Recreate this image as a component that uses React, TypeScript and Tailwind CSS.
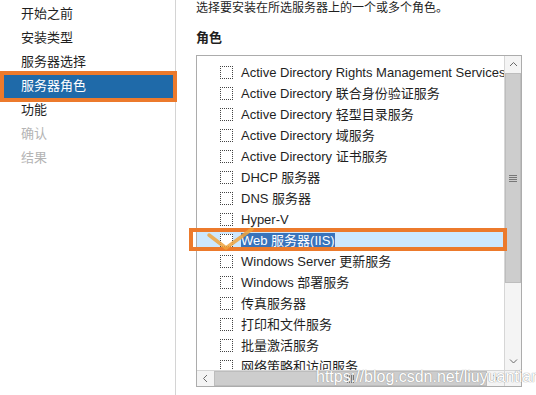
const nav = [
  { label: "开始之前", state: "normal" },
  { label: "安装类型", state: "normal" },
  { label: "服务器选择", state: "normal" },
  { label: "服务器角色", state: "active" },
  { label: "功能", state: "normal" },
  { label: "确认", state: "disabled" },
  { label: "结果", state: "disabled" },
];

const roles = [
  "Active Directory Rights Management Services",
  "Active Directory 联合身份验证服务",
  "Active Directory 轻型目录服务",
  "Active Directory 域服务",
  "Active Directory 证书服务",
  "DHCP 服务器",
  "DNS 服务器",
  "Hyper-V",
  "Web 服务器(IIS)",
  "Windows Server 更新服务",
  "Windows 部署服务",
  "传真服务器",
  "打印和文件服务",
  "批量激活服务",
  "网络策略和访问服务",
];

const SELECTED = "Web 服务器(IIS)";

function Chevron({ dir }: { dir: "up" | "down" | "left" | "right" }) {
  const d = {
    up: "M1 5 L4.5 1.5 L8 5",
    down: "M1 1.5 L4.5 5 L8 1.5",
    left: "M5 1 L1.5 4.5 L5 8",
    right: "M1.5 1 L5 4.5 L1.5 8",
  }[dir];
  const vertical = dir === "up" || dir === "down";
  return (
    <svg
      width={vertical ? 9 : 7}
      height={vertical ? 7 : 9}
      viewBox={vertical ? "0 0 9 7" : "0 0 7 9"}
      fill="none"
      stroke="#6a6a6a"
      strokeWidth="1"
    >
      <path d={d} />
    </svg>
  );
}

function Grip({ horizontal }: { horizontal?: boolean }) {
  return (
    <div className={horizontal ? "flex flex-row gap-[1px]" : "flex flex-col gap-[1px]"}>
      {[0, 1, 2, 3].map((i) => (
        <div
          key={i}
          className={horizontal ? "w-[1px] h-[8px] bg-[#777]" : "h-[1px] w-[8px] bg-[#777]"}
        />
      ))}
    </div>
  );
}

export default function App() {
  return (
    <div
      className="relative w-[536px] h-[395px] overflow-hidden bg-white flex text-[#1f1f1f]"
      style={{ fontFamily: '"Liberation Sans", "Noto Sans CJK SC", sans-serif' }}
    >
      {/* left steps */}
      <aside className="w-[176px] h-full border-r border-[#d4d4d4] pt-[2px] shrink-0">
        {nav.map((item) => (
          <div
            key={item.label}
            className={
              item.state === "active"
                ? "h-[24px] leading-[24px] pl-[21px] text-[13px] bg-[#1f6aa9] text-white"
                : item.state === "disabled"
                ? "h-[24px] leading-[24px] pl-[21px] text-[13px] text-[#b4b4b4]"
                : "h-[24px] leading-[24px] pl-[21px] text-[13px]"
            }
          >
            {item.label}
          </div>
        ))}
      </aside>

      {/* right content */}
      <main className="flex-1 pl-[20px]">
        <p className="h-[16px] leading-[16px] text-[12px]">选择要安装在所选服务器上的一个或多个角色。</p>
        <h2 className="mt-[14px] h-[16px] leading-[16px] text-[13px] font-bold">角色</h2>

        <div className="mt-[9px] w-[326px] h-[332px] border border-[#acacac] flex flex-col">
          <div className="flex flex-1 min-h-0">
            <ul className="flex-1 overflow-hidden pt-[6px]">
              {roles.map((r) => {
                const sel = r === SELECTED;
                return (
                  <li
                    key={r}
                    className={
                      sel
                        ? "h-[21px] flex items-center pl-[23px] gap-[8px] bg-[#cce8ff] whitespace-nowrap"
                        : "h-[21px] flex items-center pl-[23px] gap-[8px] whitespace-nowrap"
                    }
                  >
                    <span className="w-[13px] h-[13px] border border-dotted border-[#444] shrink-0 bg-white" />
                    <span
                      className={
                        sel
                          ? "text-[13px] leading-[15px] bg-[#3873bb] text-white"
                          : "text-[13px] leading-[15px]"
                      }
                    >
                      {r}
                    </span>
                  </li>
                );
              })}
            </ul>

            {/* vertical scrollbar */}
            <div className="w-[17px] flex flex-col bg-[#f4f4f4] border-l border-[#d6d6d6]">
              <div className="h-[17px] flex items-center justify-center">
                <Chevron dir="up" />
              </div>
              <div className="h-[210px] bg-[#cdcdcd] border border-[#bdbdbd] flex items-center justify-center">
                <Grip />
              </div>
              <div className="flex-1" />
              <div className="h-[17px] flex items-center justify-center">
                <Chevron dir="down" />
              </div>
            </div>
          </div>

          {/* horizontal scrollbar */}
          <div className="h-[16px] flex bg-[#f4f4f4] border-t border-[#d6d6d6]">
            <div className="w-[17px] flex items-center justify-center">
              <Chevron dir="left" />
            </div>
            <div className="w-[273px] bg-[#cdcdcd] border border-[#bdbdbd] flex items-center justify-center">
              <Grip horizontal />
            </div>
            <div className="w-[17px] flex items-center justify-center">
              <Chevron dir="right" />
            </div>
            <div className="w-[17px] border-l border-[#d6d6d6]" />
          </div>
        </div>
      </main>

      {/* annotation overlays */}
      <div className="absolute left-0 top-[71px] w-[177px] h-[31px] border-4 border-[#ec7a2c]" />
      <div className="absolute left-[189px] top-[228px] w-[318px] h-[23px] border-4 border-[#ec7a2c]" />
      <svg className="absolute left-[200px] top-[222px]" width="60" height="34" viewBox="0 0 60 34">
        <polyline
          points="9,13 26,26 52,7"
          fill="none"
          stroke="#f0a33c"
          strokeOpacity="0.85"
          strokeWidth="3.5"
          strokeLinecap="round"
          strokeLinejoin="round"
        />
      </svg>

      {/* watermark */}
      <div
        className="absolute left-[316px] top-[368px] text-[16px] leading-[18px] text-white whitespace-nowrap"
        style={{ textShadow: "0 0 1px #9a9a9a, 0 0 1px #9a9a9a" }}
      >
        https://blog.csdn.net/liuyuantian
      </div>
    </div>
  );
}
